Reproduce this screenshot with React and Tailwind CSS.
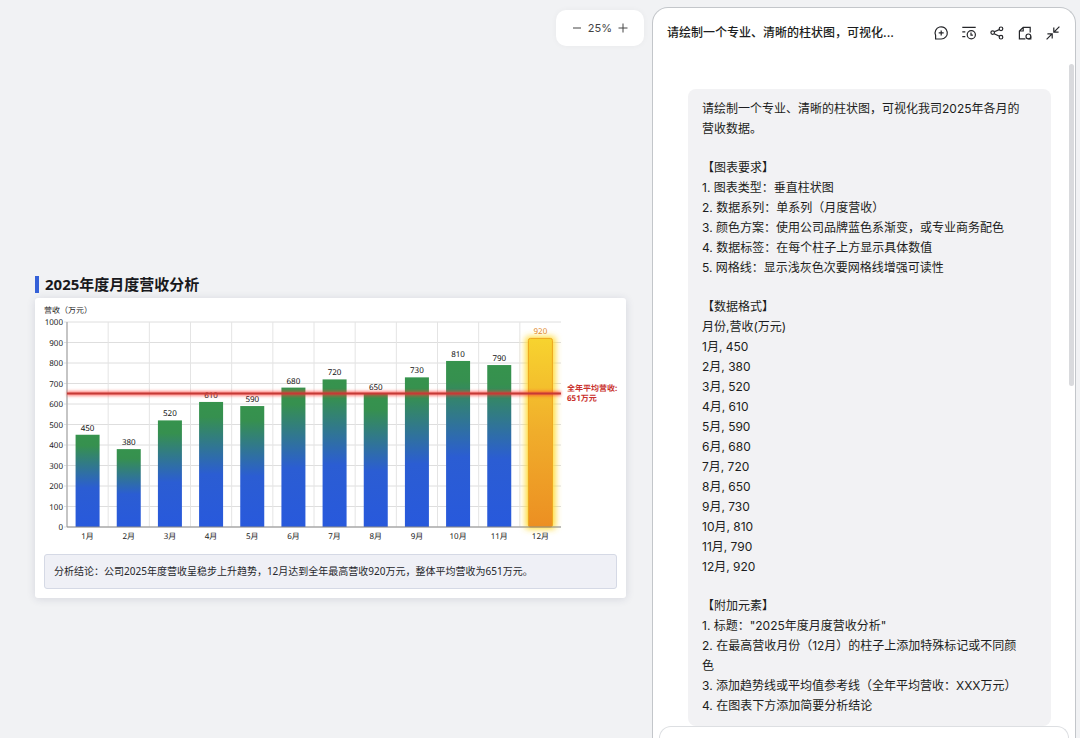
const revenue = [450, 380, 520, 610, 590, 680, 720, 650, 730, 810, 790, 920];
const ticks = [0, 100, 200, 300, 400, 500, 600, 700, 800, 900, 1000];
const average = 651;

const LEFT = 32;
const RIGHT = 526;
const BASE = 229;
const STEP = (RIGHT - LEFT) / 12;
const yOf = (value) => BASE - value * 0.205;

function RevenueChart() {
  return (
    <svg
      viewBox="0 0 591 250"
      className="block w-full font-['Noto_Sans','Noto_Sans_CJK_SC',sans-serif] text-[8px] [text-rendering:geometricPrecision]"
      role="img"
      aria-label="2025年度月度营收柱状图"
    >
      <defs>
        <linearGradient id="bar" x1="0" y1="0" x2="0" y2="1">
          <stop offset="0" stopColor="#36934d" />
          <stop offset="0.12" stopColor="#36904f" />
          <stop offset="0.58" stopColor="#2b5dd3" />
          <stop offset="1" stopColor="#2859dc" />
        </linearGradient>
        <linearGradient id="peak" x1="0" y1="0" x2="0" y2="1">
          <stop offset="0" stopColor="#f7d32f" />
          <stop offset="0.5" stopColor="#f0ad2b" />
          <stop offset="1" stopColor="#ec8f22" />
        </linearGradient>
        <filter id="glow" x="-60%" y="-10%" width="220%" height="120%">
          <feGaussianBlur stdDeviation="3" />
        </filter>
        <filter id="lineGlow" filterUnits="userSpaceOnUse" x="24" y="80" width="512" height="30">
          <feGaussianBlur stdDeviation="1.6" />
        </filter>
      </defs>

      <text x="9" y="15" fill="#222">营收（万元）</text>

      {ticks.map((t) => (
        <g key={t}>
          <line x1={LEFT - 3} x2={RIGHT} y1={yOf(t)} y2={yOf(t)} stroke="#dedede" strokeWidth="1" />
          <text x="28" y={yOf(t) + 3} textAnchor="end" fill="#222">{t}</text>
        </g>
      ))}
      {revenue.map((_, i) => (
        <line key={i} x1={LEFT + STEP * i} x2={LEFT + STEP * i} y1={yOf(1000)} y2={BASE} stroke="#e4e4e4" />
      ))}
      <line x1={LEFT} x2={LEFT} y1={yOf(1000)} y2={BASE} stroke="#999" />

      {revenue.map((value, i) => {
        const center = LEFT + STEP * (i + 0.5);
        const top = yOf(value);
        const isPeak = i === 11;
        return (
          <g key={i} textAnchor="middle">
            {isPeak && (
              <rect x={center - 15} y={top - 2} width="30" height={BASE - top + 4} rx="3" fill="#ffdc35" filter="url(#glow)" />
            )}
            <rect
              x={center - 12}
              y={top}
              width="24"
              height={BASE - top}
              rx={isPeak ? 2 : 0}
              fill={isPeak ? "url(#peak)" : "url(#bar)"}
              stroke={isPeak ? "#eda51d" : "none"}
            />
            <text x={center} y={top - 4} fill={isPeak ? "#e08a2c" : "#111"}>{value}</text>
            <text x={center} y="241" fill="#222">{i + 1}月</text>
          </g>
        );
      })}
      <line x1={LEFT} x2={RIGHT} y1={BASE} y2={BASE} stroke="#8b8b8b" />

      <line x1={LEFT} x2={RIGHT} y1={yOf(average)} y2={yOf(average)} stroke="#ff3a32" strokeWidth="5" opacity="0.6" filter="url(#lineGlow)" />
      <line x1={LEFT} x2={RIGHT} y1={yOf(average)} y2={yOf(average)} stroke="#c53a36" strokeWidth="2" />
      <g fill="#c9302c" className="font-bold">
        <text x="532" y="93">全年平均营收:</text>
        <text x="532" y="103">651万元</text>
      </g>
    </svg>
  );
}

const icons = [
  {
    label: "新建对话",
    shape: (
      <>
        <path d="M2.6 14h5.6a6.1 6.1 0 1 0-5.6-3.7z" />
        <path d="M8.2 5.4v5M5.7 7.9h5" />
      </>
    ),
  },
  {
    label: "历史记录",
    shape: (
      <>
        <path d="M1.3 2.4h13.4M1.3 6.8h3M1.3 11.6h3" />
        <circle cx="10.3" cy="9.7" r="4.1" />
        <path d="M10 7.6v2.5h1.9" />
      </>
    ),
  },
  {
    label: "分享",
    shape: (
      <>
        <circle cx="3.7" cy="7.6" r="1.8" />
        <circle cx="12" cy="3.8" r="1.8" />
        <circle cx="12" cy="12.2" r="1.8" />
        <path d="M5.4 6.8l4.9-2.2M5.2 8.7l5.2 2.6" />
      </>
    ),
  },
  {
    label: "文件",
    shape: (
      <>
        <path d="M13.2 7.6V2.3H6.2L2.4 6v7.8h6M6.2 2.3V6H2.4" />
        <circle cx="11.4" cy="11.4" r="2.4" />
        <path d="M11.4 13.8h2.4v-2.4" />
      </>
    ),
  },
  {
    label: "收起",
    shape: (
      <>
        <path d="M14.4 1.6L9.2 6.8M8.8 2.6v4.6h4.8M1.6 14.4l5.2-5.2M2.4 8.8h4.8v4.6" />
      </>
    ),
  },
];

const sections = [
  ["请绘制一个专业、清晰的柱状图，可视化我司2025年各月的", "营收数据。"],
  [
    "【图表要求】",
    "1. 图表类型：垂直柱状图",
    "2. 数据系列：单系列（月度营收）",
    "3. 颜色方案：使用公司品牌蓝色系渐变，或专业商务配色",
    "4. 数据标签：在每个柱子上方显示具体数值",
    "5. 网格线：显示浅灰色次要网格线增强可读性",
  ],
  ["【数据格式】", "月份,营收(万元)", ...revenue.map((value, i) => `${i + 1}月, ${value}`)],
  [
    "【附加元素】",
    '1. 标题："2025年度月度营收分析"',
    "2. 在最高营收月份（12月）的柱子上添加特殊标记或不同颜",
    "色",
    "3. 添加趋势线或平均值参考线（全年平均营收：XXX万元）",
    "4. 在图表下方添加简要分析结论",
  ],
];

export default function App() {
  return (
    <div className="flex h-screen overflow-hidden bg-[#f1f2f4] pr-1 font-[Inter,'Noto_Sans_CJK_SC',sans-serif] text-[#1c1d20]">
      <main className="flex min-w-0 flex-1 flex-col pt-2.5">
        <div className="mr-2 flex h-9 items-center gap-1.5 self-end rounded-[10px] bg-white px-4 text-[11px] text-[#444] shadow-[0_0_6px_rgba(0,0,0,0.04)]">
          <button type="button" aria-label="缩小">
            <svg viewBox="0 0 10 10" className="size-[10px]" stroke="currentColor"><path d="M1 5h8" /></svg>
          </button>
          <span>25%</span>
          <button type="button" aria-label="放大">
            <svg viewBox="0 0 10 10" className="size-[10px]" stroke="currentColor"><path d="M.5 5h9M5 .5v9" /></svg>
          </button>
        </div>

        <article className="mt-[228px] mr-[26px] ml-[35px] font-['Noto_Sans','Noto_Sans_CJK_SC',sans-serif]">
          <h1 className="mb-1 flex h-5 items-center gap-1.5 text-[15px] font-bold text-[#18191c]">
            <span className="h-[17px] w-1 bg-[#3561d8]" />
            2025年度月度营收分析
          </h1>
          <section className="rounded-[3px] bg-white pb-[9px] shadow-[0_1px_8px_rgba(40,50,90,0.14)]">
            <RevenueChart />
            <p className="mx-[9px] mt-1.5 flex h-[35px] items-center rounded-[3px] border border-[#d5d9e5] bg-[#eff0f6] px-[9px] text-[10px] text-[#26272b]">
              分析结论：公司2025年度营收呈稳步上升趋势，12月达到全年最高营收920万元，整体平均营收为651万元。
            </p>
          </section>
        </article>
      </main>

      <aside className="relative mt-[7px] flex w-[424px] shrink-0 flex-col rounded-t-2xl border border-b-0 border-[#c3c6ca] bg-white">
        <header className="flex h-[50px] shrink-0 items-center justify-between px-[14px]">
          <h2 className="text-[12px] font-medium whitespace-nowrap">请绘制一个专业、清晰的柱状图，可视化...</h2>
          <div className="flex gap-3">
            {icons.map(({ label, shape }) => (
              <button key={label} type="button" aria-label={label}>
                <svg viewBox="0 0 16 16" className="size-4" fill="none" stroke="#25262a" strokeWidth="1.2">{shape}</svg>
              </button>
            ))}
          </div>
        </header>

        <div className="min-h-0 flex-1 overflow-hidden pt-[31px] pr-6 pl-[35px]">
          <div className="flex flex-col gap-[19px] rounded-lg bg-[#f2f2f4] px-[14px] py-2.5 text-[12px] leading-5">
            {sections.map((lines) => (
              <div key={lines[0]}>
                {lines.map((line) => (
                  <p key={line} className="whitespace-nowrap">{line}</p>
                ))}
              </div>
            ))}
          </div>
        </div>

        <div className="mx-1.5 h-3 shrink-0 rounded-t-2xl border border-b-0 border-[#dddfe2] bg-white" />
        <div className="absolute top-14 right-px h-[322px] w-[5px] rounded-full bg-[#d9dadd]" />
      </aside>
    </div>
  );
}
